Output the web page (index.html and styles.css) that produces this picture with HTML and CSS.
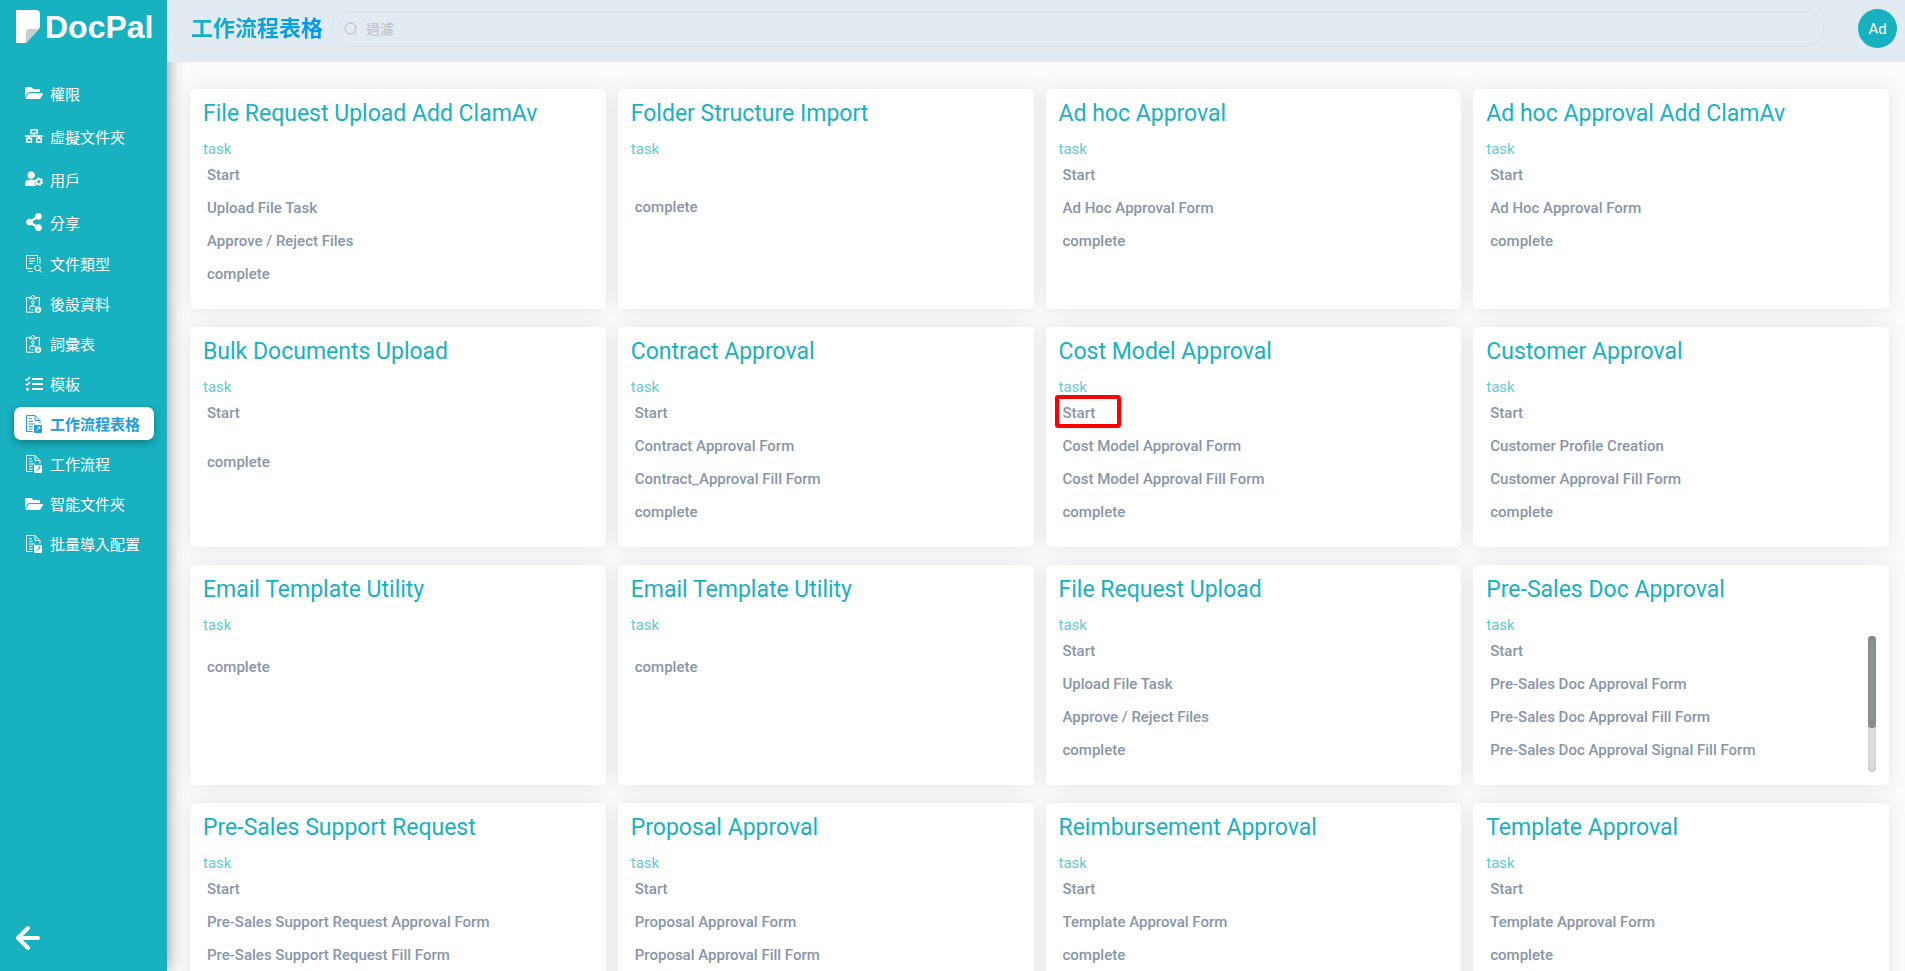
FILE: index.html
```html
<!DOCTYPE html>
<html lang="zh-Hant">
<head>
<meta charset="utf-8">
<meta name="viewport" content="width=device-width, initial-scale=1">
<title>DocPal</title>
<link rel="stylesheet" href="styles.css">
</head>
<body>
<svg class="sprite" aria-hidden="true">
  <symbol id="i-folder" viewBox="0 0 576 512"><path fill="currentColor" d="M572.694 292.093L500.27 416.248A63.997 63.997 0 0 1 444.989 448H45.025c-18.523 0-30.064-20.093-20.731-36.093l72.424-124.155A64 64 0 0 1 152 256h399.964c18.523 0 30.064 20.093 20.73 36.093zM152 224h328v-48c0-26.51-21.49-48-48-48H272l-64-64H48C21.49 64 0 85.49 0 112v278.046l69.077-118.418C86.214 242.25 117.989 224 152 224z"/></symbol>
  <symbol id="i-network" viewBox="0 0 18 18"><g fill="none" stroke="currentColor" stroke-width="1.5"><rect x="6" y="2.8" width="6" height="3.6"/><rect x="1.8" y="11.4" width="4.6" height="3.6"/><rect x="11.6" y="11.4" width="4.6" height="3.6"/><path d="M0 8.9h18M9 6.4v2.5M4.1 8.9v2.5M13.9 8.9v2.5"/></g></symbol>
  <symbol id="i-user" viewBox="0 0 18 18"><g fill="currentColor"><circle cx="6.2" cy="5.2" r="3.6"/><path d="M0 16v-2.200a4 4 0 0 1 4-4h4.200c.8 0 1.400.2 2 .5-.9 2-.6 4.200.9 5.700z"/></g><circle cx="13.900" cy="11.700" r="2.500" fill="none" stroke="currentColor" stroke-width="1.800"/><circle cx="13.900" cy="11.700" r="3.700" fill="none" stroke="currentColor" stroke-width="1.300" stroke-dasharray="1.900 1.970"/></symbol>
  <symbol id="i-share" viewBox="-32 0 512 512"><path fill="currentColor" d="M352 320c-22.608 0-43.387 7.819-59.79 20.895l-102.486-64.054a96.551 96.551 0 0 0 0-41.683l102.486-64.054C308.613 184.181 329.392 192 352 192c53.019 0 96-42.981 96-96S405.019 0 352 0s-96 42.981-96 96c0 7.158.79 14.13 2.276 20.841L155.79 180.895C139.387 167.819 118.608 160 96 160c-53.019 0-96 42.981-96 96s42.981 96 96 96c22.608 0 43.387-7.819 59.79-20.895l102.486 64.054A96.301 96.301 0 0 0 256 416c0 53.019 42.981 96 96 96s96-42.981 96-96-42.981-96-96-96z"/></symbol>
  <symbol id="i-doctype" viewBox="0 0 18 18"><g fill="none" stroke="currentColor" stroke-width="1"><path d="M7.500 13.500H1.500v-13h11v8M4 3.500h6M4 6h6M4 8.500h4M12.500 2.500h2.500v6M3 16.500h5"/><circle cx="12.500" cy="13" r="2.800"/><path d="M14.500 15l2.200 2.500"/></g></symbol>
  <symbol id="i-clipboard" viewBox="0 0 18 18"><g fill="none" stroke="currentColor" stroke-width="1"><path d="M9 17.200H1.500V2.500h3M11.500 2.500h2.800v8"/><path d="M4.500 3.800V2.300h1.700a1.800 1.800 0 0 1 3.600 0h1.700v1.500z"/><circle cx="8" cy="7.300" r="1.400"/><path d="M8 8.700v2M4.500 14.500v-1.800l1.500-1.500h4l1 1M6.500 14.500h2M5.500 10.200l1 1"/></g><circle cx="13" cy="14.800" r="3.200" fill="currentColor"/><path class="knock" d="M13 13.200v3M12 15l1 1.200 1-1.200"/></symbol>
  <symbol id="i-tasks" viewBox="0 0 18 18"><g fill="none" stroke="currentColor"><path stroke-width="2" d="M7 4h11M7 9h11M7 14h11"/><path stroke-width="1.500" d="M.5 4l1.500 1.300L5 2M.5 9l1.500 1.300L5 7"/></g><circle cx="2.500" cy="14.200" r="1.500" fill="currentColor"/></symbol>
  <symbol id="i-flow" viewBox="0 0 18 18"><g fill="none" stroke="currentColor" stroke-width="1"><path d="M7.500 16.500H1.500V.5h8.500l5 5v3M10 .5v5h5"/><path d="M4 3.800h3M4 6.500h4M4 9h6M4 11.500h3.500M4 14h3.500"/></g><rect x="9" y="10" width="8" height="8" rx="1" fill="currentColor"/><path class="knock" d="M11.300 15.900l.8-.8 2.300-2.400M12.800 12h2v2"/></symbol>
</svg>

<div class="app">
  <aside class="sidebar">
    <a class="brand" href="#">
      <svg class="brand-mark" viewBox="0 0 24 33" aria-hidden="true"><path fill="#fff" d="M0 0h20a4 4 0 0 1 4 4v12a5 5 0 0 1-1.500 3.500L10 33H0z"/><path fill="#ccc" d="M10 33V23a4 4 0 0 1 4-4h9z"/></svg>
      <span>DocPal</span>
    </a>
    <nav>
      <ul class="nav">
        <li><a class="nav-link tall" href="#"><svg class="icon"><use href="#i-folder"/></svg>權限</a></li>
        <li><a class="nav-link tall" href="#"><svg class="icon"><use href="#i-network"/></svg>虛擬文件夾</a></li>
        <li><a class="nav-link tall" href="#"><svg class="icon"><use href="#i-user"/></svg>用戶</a></li>
        <li><a class="nav-link tall" href="#"><svg class="icon"><use href="#i-share"/></svg>分享</a></li>
        <li><a class="nav-link" href="#"><svg class="icon"><use href="#i-doctype"/></svg>文件類型</a></li>
        <li><a class="nav-link" href="#"><svg class="icon"><use href="#i-clipboard"/></svg>後設資料</a></li>
        <li><a class="nav-link" href="#"><svg class="icon"><use href="#i-clipboard"/></svg>詞彙表</a></li>
        <li><a class="nav-link" href="#"><svg class="icon"><use href="#i-tasks"/></svg>模板</a></li>
        <li><a class="nav-link active" href="#" aria-current="page"><svg class="icon"><use href="#i-flow"/></svg>工作流程表格</a></li>
        <li><a class="nav-link" href="#"><svg class="icon"><use href="#i-flow"/></svg>工作流程</a></li>
        <li><a class="nav-link" href="#"><svg class="icon"><use href="#i-folder"/></svg>智能文件夾</a></li>
        <li><a class="nav-link" href="#"><svg class="icon"><use href="#i-flow"/></svg>批量導入配置</a></li>
      </ul>
    </nav>
    <button class="collapse" type="button" aria-label="收合">
      <svg viewBox="0 0 24 24" fill="none" stroke="#fff" stroke-width="4" stroke-linecap="round" stroke-linejoin="round" aria-hidden="true"><path d="M12 2L2 12l10 10M3 12h19"/></svg>
    </button>
  </aside>

  <div class="page">
    <header class="topbar">
      <h1 class="page-title">工作流程表格</h1>
      <label class="search">
        <svg viewBox="0 0 14 14" fill="none" stroke="#b4b9c1" aria-hidden="true"><circle cx="6.500" cy="6.500" r="5.500"/><path d="M10.500 10.500l2.500 2.500"/></svg>
        <input type="text" placeholder="過濾" aria-label="過濾">
      </label>
      <button class="avatar" type="button">Ad</button>
    </header>

    <main class="content">
      <article class="card"><h2>File Request Upload Add ClamAv</h2><p class="kind">task</p>
        <ul class="steps"><li>Start</li><li>Upload File Task</li><li>Approve / Reject Files</li><li>complete</li></ul></article>
      <article class="card"><h2>Folder Structure Import</h2><p class="kind">task</p>
        <ul class="steps"><li></li><li></li><li>complete</li></ul></article>
      <article class="card"><h2>Ad hoc Approval</h2><p class="kind">task</p>
        <ul class="steps"><li>Start</li><li>Ad Hoc Approval Form</li><li>complete</li></ul></article>
      <article class="card"><h2>Ad hoc Approval Add ClamAv</h2><p class="kind">task</p>
        <ul class="steps"><li>Start</li><li>Ad Hoc Approval Form</li><li>complete</li></ul></article>

      <article class="card"><h2>Bulk Documents Upload</h2><p class="kind">task</p>
        <ul class="steps"><li>Start</li><li></li><li>complete</li></ul></article>
      <article class="card"><h2>Contract Approval</h2><p class="kind">task</p>
        <ul class="steps"><li>Start</li><li>Contract Approval Form</li><li>Contract_Approval Fill Form</li><li>complete</li></ul></article>
      <article class="card marked"><h2>Cost Model Approval</h2><p class="kind">task</p>
        <ul class="steps"><li>Start</li><li>Cost Model Approval Form</li><li>Cost Model Approval Fill Form</li><li>complete</li></ul></article>
      <article class="card"><h2>Customer Approval</h2><p class="kind">task</p>
        <ul class="steps"><li>Start</li><li>Customer Profile Creation</li><li>Customer Approval Fill Form</li><li>complete</li></ul></article>

      <article class="card"><h2>Email Template Utility</h2><p class="kind">task</p>
        <ul class="steps"><li></li><li>complete</li></ul></article>
      <article class="card"><h2>Email Template Utility</h2><p class="kind">task</p>
        <ul class="steps"><li></li><li>complete</li></ul></article>
      <article class="card"><h2>File Request Upload</h2><p class="kind">task</p>
        <ul class="steps"><li>Start</li><li>Upload File Task</li><li>Approve / Reject Files</li><li>complete</li></ul></article>
      <article class="card"><h2>Pre-Sales Doc Approval</h2><p class="kind">task</p>
        <ul class="steps"><li>Start</li><li>Pre-Sales Doc Approval Form</li><li>Pre-Sales Doc Approval Fill Form</li><li>Pre-Sales Doc Approval Signal Fill Form</li></ul>
        <div class="scrollbar" aria-hidden="true"><div class="thumb"></div></div></article>

      <article class="card"><h2>Pre-Sales Support Request</h2><p class="kind">task</p>
        <ul class="steps"><li>Start</li><li>Pre-Sales Support Request Approval Form</li><li>Pre-Sales Support Request Fill Form</li></ul></article>
      <article class="card"><h2>Proposal Approval</h2><p class="kind">task</p>
        <ul class="steps"><li>Start</li><li>Proposal Approval Form</li><li>Proposal Approval Fill Form</li></ul></article>
      <article class="card"><h2>Reimbursement Approval</h2><p class="kind">task</p>
        <ul class="steps"><li>Start</li><li>Template Approval Form</li><li>complete</li></ul></article>
      <article class="card"><h2>Template Approval</h2><p class="kind">task</p>
        <ul class="steps"><li>Start</li><li>Template Approval Form</li><li>complete</li></ul></article>
    </main>
  </div>
</div>
</body>
</html>
```
FILE: styles.css
```css
:root {
  --teal: #18b1c0;
  --blue: #209ce0;
  --bar: #e3ebf2;
  --ink: #8796a8;
}

*, *::after { box-sizing: border-box; }

body {
  margin: 0;
  font-family: Roboto, "Noto Sans CJK TC", sans-serif;
  font-size: 15px;
  background: #fafbfd;
}

ul, h1, h2, p { margin: 0; padding: 0; }
ul { list-style: none; }
button { border: 0; padding: 0; cursor: pointer; font-family: inherit; }
a { color: inherit; text-decoration: none; }
.sprite { position: absolute; width: 0; height: 0; }

.app { display: flex; height: 100vh; overflow: hidden; }

.sidebar {
  position: relative;
  z-index: 1;
  flex: none;
  width: 167px;
  display: flex;
  flex-direction: column;
  background: var(--teal);
  color: #fff;
  box-shadow: 0 0 16px rgba(0, 0, 0, 0.45);
}

.brand {
  display: flex;
  align-items: center;
  gap: 5px;
  padding: 7px 0 0 16px;
  height: 46px;
  font: bold 32px/36px "Liberation Sans", Arial, sans-serif;
}
.brand-mark { width: 24px; height: 33px; }

.nav { display: flex; flex-direction: column; gap: 7px; padding: 29px 13px 0 14px; }
.nav-link {
  display: flex;
  align-items: center;
  gap: 7px;
  height: 33px;
  padding: 0 0 0 11px;
  border-radius: 7px;
  white-space: nowrap;
  color: #fff;
  --knock: var(--teal);
}
.nav-link.tall { height: 36px; }
.nav-link.active {
  background: #fff;
  color: var(--blue);
  font-weight: 700;
  box-shadow: 0 3px 8px rgba(0, 0, 0, 0.3);
  --knock: #fff;
}
.icon { width: 18px; height: 18px; flex: none; overflow: visible; }
.knock { fill: none; stroke: var(--knock); stroke-width: 1; }

.collapse {
  margin: auto 0 21px 16px;
  width: 24px;
  height: 24px;
  background: none;
}
.collapse svg { display: block; }

.page { flex: 1; min-width: 0; display: flex; flex-direction: column; }

.topbar {
  position: relative;
  z-index: 2;
  flex: none;
  display: flex;
  align-items: center;
  height: 62px;
  padding: 0 8px 5px 24px;
  background: var(--bar);
}
.page-title {
  font-size: 22px;
  line-height: 32px;
  font-weight: 700;
  color: transparent;
  background: linear-gradient(to right, var(--teal), #0096f8);
  background-clip: text;
  -webkit-background-clip: text;
}
.search {
  flex: 1;
  display: flex;
  align-items: center;
  gap: 8px;
  height: 36px;
  margin: 0 34px 0 8px;
  padding: 0 12px;
  border: 1px solid #d9e0e8;
  border-radius: 18px;
}
.search svg { width: 14px; height: 14px; }
.search input {
  flex: 1;
  min-width: 0;
  border: 0;
  padding: 0;
  outline: 0;
  background: none;
  font: inherit;
  font-size: 14px;
}
.search input::placeholder { color: #b9bec6; }
.avatar {
  width: 39px;
  height: 39px;
  border-radius: 50%;
  background: var(--teal);
  color: #fff;
  font-size: 15px;
}

.content {
  flex: 1;
  min-height: 0;
  overflow-y: auto;
  scrollbar-width: none;
  display: grid;
  grid-template-columns: repeat(4, minmax(0, 1fr));
  grid-auto-rows: 220px;
  gap: 18px 12px;
  padding: 27px 16px 18px 23px;
}

.card {
  position: relative;
  display: flex;
  flex-direction: column;
  padding: 11px 13px 13px;
  background: #fff;
  border-radius: 5px;
  box-shadow: 0 0 20px rgba(0, 0, 0, 0.09);
}
.card h2 { font-size: 23px; line-height: 28px; font-weight: 400; color: var(--teal); }
.kind { margin-top: 11px; line-height: 20px; color: #5fcbd4; }
.steps { flex: 1; min-height: 0; overflow-y: auto; scrollbar-width: none; }
.steps li { padding: 8px 4px; line-height: 17px; font-weight: 500; color: var(--ink); }

.scrollbar {
  position: absolute;
  top: 71px;
  right: 13px;
  bottom: 13px;
  width: 8px;
  border-radius: 4px;
  background: #dfe2e1;
  box-shadow: inset 0 0 5px rgba(0, 0, 0, 0.15);
}
.thumb {
  height: 68%;
  border-radius: 4px;
  background: #919695;
  box-shadow: inset 0 0 5px rgba(0, 0, 0, 0.2);
}

.marked::after {
  content: "";
  position: absolute;
  left: 9px;
  top: 68px;
  width: 66px;
  height: 33px;
  border: 4px solid #f00;
  border-radius: 3px;
}
```
